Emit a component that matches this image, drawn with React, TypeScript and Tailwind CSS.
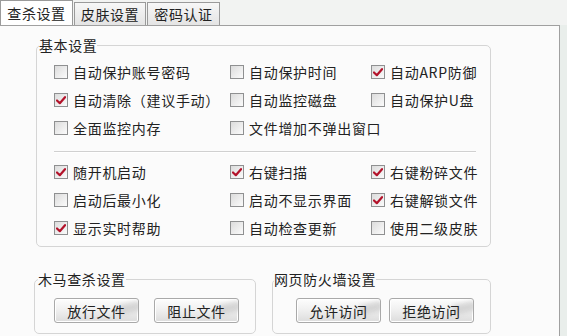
import React from "react";

const font = { fontFamily: '"Noto Sans CJK SC", "Noto Sans", sans-serif' };

function Check({ checked }: { checked: boolean }) {
  return (
    <span className="inline-flex h-[14px] w-[14px] shrink-0 items-center justify-center border border-[#8f9091] bg-gradient-to-br from-[#dcdcdc] to-[#fbfbfb]">
      {checked && (
        <svg width="10" height="9" viewBox="0 0 10 9">
          <path d="M1 4.5 L3.8 7.2 L9 1.2" fill="none" stroke="#b3122a" strokeWidth="2.2" strokeLinejoin="round" strokeLinecap="round" />
        </svg>
      )}
    </span>
  );
}

function Item({ label, checked }: { label: string; checked?: boolean }) {
  return (
    <div className="flex h-[28px] items-center gap-[5px] whitespace-nowrap">
      <Check checked={!!checked} />
      <span className="text-[14px] leading-none tracking-[0.7px] text-[#222]">{label}</span>
    </div>
  );
}

function Btn({ label }: { label: string }) {
  return (
    <button className="relative h-[25px] w-[85px] overflow-hidden rounded-[3px] border border-[#a9a9a9] bg-gradient-to-b from-[#fdfdfd] via-[#efefef] to-[#dcdcdc] text-[14px] leading-none tracking-[0.6px] text-[#222] shadow-[inset_0_0_0_1px_#ffffff]">
      <span className="pointer-events-none absolute right-[-4px] top-[4px] h-[10px] w-[26px] rotate-[-12deg] rounded-full bg-[#c9c9c9] opacity-70 blur-[2px]" />
      <span className="relative">{label}</span>
    </button>
  );
}

export default function App() {
  return (
    <div className="h-[336px] w-[567px] overflow-hidden bg-[#e9eeeb]" style={font}>
      <div className="flex h-[25px] items-end bg-[#f2f3f2]">
        <div className="flex h-[25px] w-[73px] items-center justify-center border-x border-t border-[#9a9a9a] bg-white text-[14px] tracking-[0.6px] text-[#222]">
          查杀设置
        </div>
        <div className="ml-[1px] flex h-[23px] w-[72px] items-center justify-center border-x border-t border-[#9a9a9a] bg-gradient-to-b from-[#f7f7f7] to-[#e4e4e4] text-[14px] tracking-[0.6px] text-[#222]">
          皮肤设置
        </div>
        <div className="ml-[1px] flex h-[23px] w-[73px] items-center justify-center border-x border-t border-[#9a9a9a] bg-gradient-to-b from-[#f7f7f7] to-[#e4e4e4] text-[14px] tracking-[0.6px] text-[#222]">
          密码认证
        </div>
      </div>
      <div className="h-[311px] w-[560px] border-r border-t border-[#a0a0a0] bg-[#fbfbfb] pl-[36px] pt-[12px]">
        <fieldset className="h-[209px] w-[455px] rounded-[5px] border border-[#d5d5d5] pl-[17px] pr-[4px]">
          <legend className="-ml-[15px] text-[14px] leading-[14px] tracking-[0.6px] text-[#222]">基本设置</legend>
          <div className="mt-[6px] grid grid-cols-[176px_141px_1fr]">
            <Item label="自动保护账号密码" />
            <Item label="自动保护时间" />
            <Item label="自动ARP防御" checked />
            <Item label="自动清除（建议手动）" checked />
            <Item label="自动监控磁盘" />
            <Item label="自动保护U盘" />
            <Item label="全面监控内存" />
            <Item label="文件增加不弹出窗口" />
            <div />
          </div>
          <div className="mb-[5px] mr-[10px] mt-[9px] h-[2px] border-t border-b border-t-[#d0d0d0] border-b-white" />
          <div className="grid grid-cols-[176px_141px_1fr]">
            <Item label="随开机启动" checked />
            <Item label="右键扫描" checked />
            <Item label="右键粉碎文件" checked />
            <Item label="启动后最小化" />
            <Item label="启动不显示界面" />
            <Item label="右键解锁文件" checked />
            <Item label="显示实时帮助" checked />
            <Item label="自动检查更新" />
            <Item label="使用二级皮肤" />
          </div>
        </fieldset>
        <div className="-ml-[2px] mt-[25px] flex gap-[16px]">
          <fieldset className="h-[62px] w-[222px] rounded-[5px] border border-[#d5d5d5] pl-[19px]">
            <legend className="-ml-[16px] text-[14px] leading-[14px] tracking-[0.6px] text-[#222]">木马查杀设置</legend>
            <div className="mt-[12px] flex gap-[15px]">
              <Btn label="放行文件" />
              <Btn label="阻止文件" />
            </div>
          </fieldset>
          <fieldset className="h-[62px] w-[219px] rounded-[5px] border border-[#d5d5d5] pl-[23px]">
            <legend className="-ml-[22px] text-[14px] leading-[14px] tracking-[0.6px] text-[#222]">网页防火墙设置</legend>
            <div className="mt-[12px] flex gap-[8px]">
              <Btn label="允许访问" />
              <Btn label="拒绝访问" />
            </div>
          </fieldset>
        </div>
      </div>
    </div>
  );
}
